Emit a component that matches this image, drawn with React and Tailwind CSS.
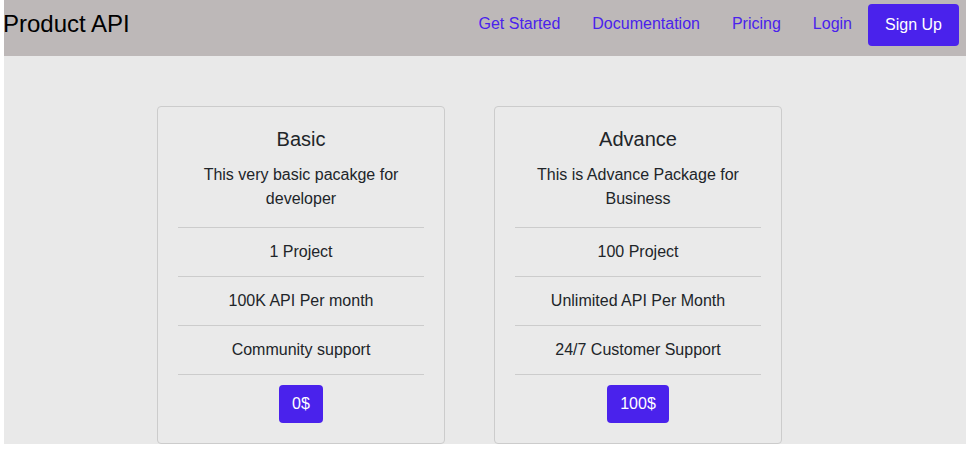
import React from "react";

const plans = [
  {
    title: "Basic",
    desc: "This very basic pacakge for developer",
    rows: ["1 Project", "100K API Per month", "Community support"],
    price: "0$",
  },
  {
    title: "Advance",
    desc: "This is Advance Package for Business",
    rows: ["100 Project", "Unlimited API Per Month", "24/7 Customer Support"],
    price: "100$",
  },
];

export default function App() {
  return (
    <div className="ml-[4px] bg-white text-[#212529]" style={{ fontFamily: '"Liberation Sans", Arial, sans-serif' }}>
      <header className="h-[56px] bg-[#bdb8b8] flex items-center justify-between pr-[7px]">
        <div className="text-[24px] leading-[28px] text-black -mt-[8px] -ml-[1px]">Product API</div>
        <nav className="flex items-center">
          {["Get Started", "Documentation", "Pricing", "Login"].map((l) => (
            <a key={l} className="px-4 text-[16px] leading-[24px] text-[#4a22ec] -mt-[9px]">
              {l}
            </a>
          ))}
          <button className="w-[91px] h-[42px] -mt-[7px] rounded-[4px] bg-[#4a22ec] text-white text-[16px]">
            Sign Up
          </button>
        </nav>
      </header>
      <main className="bg-[#e9e9e9] pt-[50px] pl-[153px] flex gap-[49px]">
        {plans.map((p) => (
          <div
            key={p.title}
            className="w-[288px] h-[338px] border border-[#cccccc] rounded-[4px] bg-[#eaeaea] px-[20px] text-center"
          >
            <div className="text-[20px] leading-[24px] pt-[20px]">{p.title}</div>
            <div className="text-[16px] leading-[24px] mt-[12px] px-[3px]">{p.desc}</div>
            <div className="mt-[16px]">
              {p.rows.map((r) => (
                <div key={r} className="border-t border-[#cccccc] py-[12px] text-[16px] leading-[24px]">
                  {r}
                </div>
              ))}
              <div className="border-t border-[#cccccc] pt-[10px] flex justify-center">
                <button className="h-[38px] px-[13px] rounded-[4px] bg-[#4a22ec] text-white text-[16px]">
                  {p.price}
                </button>
              </div>
            </div>
          </div>
        ))}
      </main>
    </div>
  );
}
